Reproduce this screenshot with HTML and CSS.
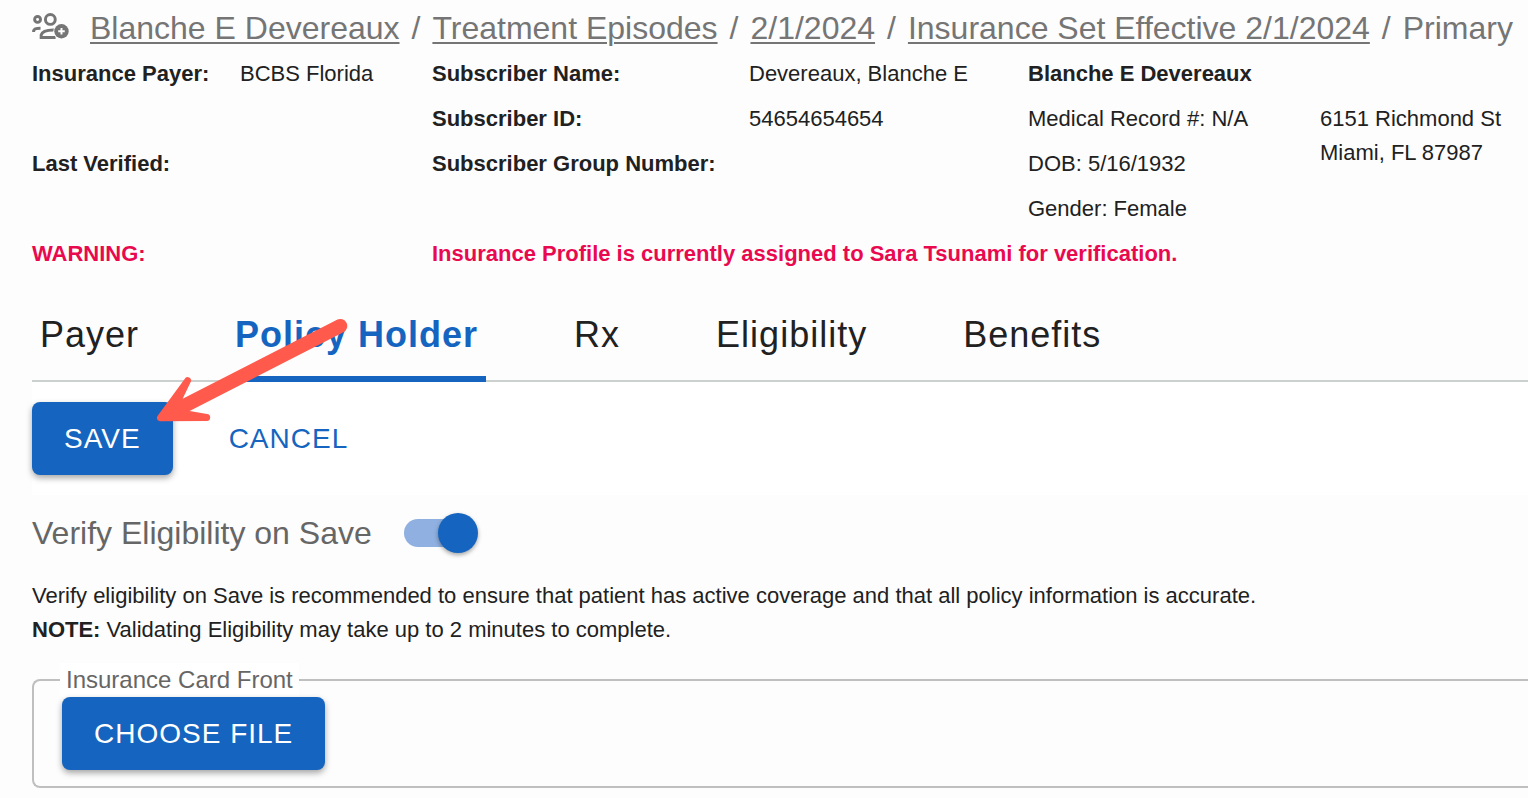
FILE: index.html
```html
<!DOCTYPE html>
<html lang="en">
<head>
  <meta charset="UTF-8">
  <meta name="viewport" content="width=device-width, initial-scale=1.0">
  <title>Insurance Profile - Policy Holder</title>
  <link rel="stylesheet" href="styles.css">
</head>
<body>
  <header class="page-header">
    <svg class="header-icon" viewBox="96 36 116 84" aria-hidden="true">
      <g fill="none" stroke="#757575" stroke-width="9">
        <circle cx="113" cy="58" r="9" />
        <circle cx="152" cy="58" r="15" />
        <path d="M101 96 V92 Q103 85 122 85" />
        <path d="M168 113 H124 V105 Q128 89 166 90" />
      </g>
      <circle cx="186" cy="94" r="25" fill="#fdfdfd" />
      <circle cx="186" cy="94" r="22" fill="#757575" />
      <path d="M186 84 V104 M176 94 H196" stroke="#fdfdfd" stroke-width="6" />
    </svg>
    <nav class="breadcrumb" aria-label="Breadcrumb">
      <a href="#">Blanche E Devereaux</a>
      <span>/</span>
      <a href="#">Treatment Episodes</a>
      <span>/</span>
      <a href="#">2/1/2024</a>
      <span>/</span>
      <a href="#">Insurance Set Effective 2/1/2024</a>
      <span>/</span>
      <span>Primary</span>
    </nav>
  </header>

  <main>
    <section class="summary">
      <strong class="col-1">Insurance Payer:</strong>
      <span class="col-2">BCBS Florida</span>
      <strong class="col-3">Subscriber Name:</strong>
      <span class="col-4">Devereaux, Blanche E</span>
      <strong class="col-5">Blanche E Devereaux</strong>

      <strong class="col-3">Subscriber ID:</strong>
      <span class="col-4">54654654654</span>
      <span class="col-5">Medical Record #: N/A</span>
      <address class="address">6151 Richmond St<br>Miami, FL 87987</address>

      <strong class="col-1">Last Verified:</strong>
      <strong class="col-3">Subscriber Group Number:</strong>
      <span class="col-5">DOB: 5/16/1932</span>

      <span class="col-5">Gender: Female</span>

      <strong class="col-1 warning">WARNING:</strong>
      <strong class="warning warning-text">Insurance Profile is currently assigned to Sara Tsunami for verification.</strong>
    </section>

    <div class="tabs" role="tablist">
      <button class="tab" role="tab">Payer</button>
      <button class="tab active" role="tab" aria-selected="true">Policy Holder</button>
      <button class="tab" role="tab">Rx</button>
      <button class="tab" role="tab">Eligibility</button>
      <button class="tab" role="tab">Benefits</button>
    </div>

    <div class="actions">
      <button class="btn btn-primary">SAVE</button>
      <button class="btn btn-text">CANCEL</button>
      <!-- Arrow pointing at the save button -->
      <svg class="arrow" viewBox="0 0 630 360" aria-hidden="true">
        <path fill="#ff5a4c" d="M561 29 A21 21 0 0 1 580 67 L119 303 L171 312 A10 10 0 0 1 169 333 L30 334 Q17 330 22 319 L104 207 A10 10 0 0 1 122 216 L98 266 Z" />
      </svg>
    </div>

    <div class="verify">
      <label for="verifyOnSave">Verify Eligibility on Save</label>
      <input type="checkbox" class="switch" id="verifyOnSave" role="switch" checked>
    </div>

    <p class="note">
      Verify eligibility on Save is recommended to ensure that patient has active coverage and that all policy information is accurate.<br>
      <strong>NOTE:</strong> Validating Eligibility may take up to 2 minutes to complete.
    </p>

    <fieldset class="card-upload">
      <legend>Insurance Card Front</legend>
      <button class="btn btn-primary">CHOOSE FILE</button>
    </fieldset>
  </main>
</body>
</html>
```
FILE: styles.css
```css
* {
  box-sizing: border-box;
}

body {
  font-family: "Liberation Sans", Arial, sans-serif;
  font-size: 22px;
  line-height: 34px;
  margin: 0;
  padding: 8px 0 8px 32px;
  background: #fdfdfd;
  color: #212121;
  overflow-x: hidden;
}

button {
  font-family: inherit;
  border: none;
  background: none;
  cursor: pointer;
  white-space: nowrap;
}

/* Header */
.page-header {
  display: flex;
  gap: 20px;
  height: 49px;
  color: #757575;
}

.header-icon {
  width: 38px;
  height: 28px;
  margin-top: 4px;
  flex-shrink: 0;
}

.breadcrumb {
  display: flex;
  gap: 12px;
  font-size: 32px;
  line-height: 40px;
  white-space: nowrap;
}

.breadcrumb a {
  color: inherit;
  text-decoration-thickness: 2px;
  text-underline-offset: 3px;
}

/* Patient and payer summary */
.summary {
  display: grid;
  grid-template-columns: 208fr 192fr 317fr 279fr 292fr 208fr;
  grid-auto-rows: 34px;
  row-gap: 11px;
  white-space: nowrap;
}

.summary > * {
  min-width: 0;
}

.col-1 { grid-column: 1; }
.col-2 { grid-column: 2; }
.col-3 { grid-column: 3; }
.col-4 { grid-column: 4; }
.col-5 { grid-column: 5; }

.address {
  grid-column: 6;
  font-style: normal;
}

.warning {
  color: #e9094f;
}

.warning-text {
  grid-column: 3 / -1;
}

/* Tabs */
.tabs {
  display: flex;
  gap: 80px;
  margin-top: 16px;
  border-bottom: 2px solid #cbd1cf;
}

.tab {
  height: 95px;
  margin-bottom: -2px;
  padding: 6px 8px 0;
  border-bottom: 6px solid transparent;
  font-size: 36px;
  letter-spacing: 1px;
  color: #212121;
}

.tab.active {
  border-bottom-color: #1565c0;
  color: #1565c0;
  font-weight: bold;
}

/* Buttons */
.actions {
  position: relative;
  display: flex;
  gap: 24px;
  padding: 20px 0;
  background: #fff;
}

.btn {
  height: 73px;
  padding: 0 32px;
  border-radius: 8px;
  font-size: 28px;
  letter-spacing: 1px;
}

.btn-primary {
  background: #1565c0;
  color: #fff;
  box-shadow: 0 3px 6px rgba(0, 0, 0, 0.35);
}

.btn-text {
  color: #1565c0;
}

.arrow {
  position: absolute;
  left: 118px;
  top: -72px;
  width: 210px;
  height: 120px;
  pointer-events: none;
}

/* Verify switch */
.verify {
  display: flex;
  align-items: center;
  gap: 32px;
  height: 76px;
  font-size: 32px;
  color: #666;
}

.switch {
  appearance: none;
  position: relative;
  width: 68px;
  height: 28px;
  margin: 0;
  border-radius: 14px;
  background: #8fb0e0;
  cursor: pointer;
}

.switch::before {
  content: "";
  position: absolute;
  top: -6px;
  right: -6px;
  width: 40px;
  height: 40px;
  border-radius: 50%;
  background: #1565c0;
  box-shadow: 0 2px 4px rgba(0, 0, 0, 0.35);
}

.note {
  margin: 8px 0 16px;
}

/* Card upload */
.card-upload {
  margin: 0;
  padding: 0 0 16px 28px;
  border: 2px solid #bfbfbf;
  border-right: none;
  border-radius: 8px 0 0 8px;
}

.card-upload legend {
  margin-left: -2px;
  padding: 0 6px;
  background: #fff;
  font-size: 24px;
  color: #666;
}

.card-upload .btn {
  display: block;
}
```
